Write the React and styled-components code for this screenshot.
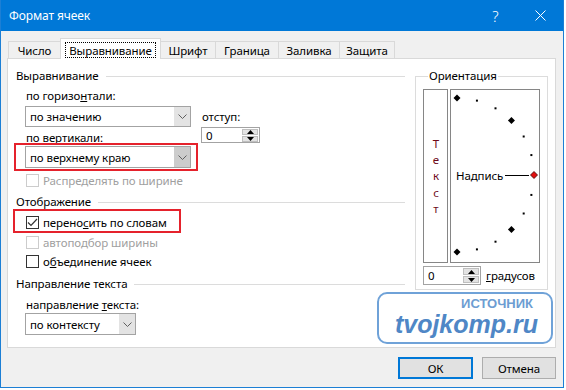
import React from "react";
import styled, { createGlobalStyle, css } from "styled-components";

const GlobalStyle = createGlobalStyle`
  html, body {
    margin: 0;
    padding: 0;
    background: #fff;
  }
  body {
    font-family: "Noto Sans", "Liberation Sans", sans-serif;
    font-size: 11.5px;
    letter-spacing: -0.1px;
    color: #000;
  }
`;

const Window = styled.div`
  position: relative;
  width: 564px;
  height: 388px;
  box-sizing: border-box;
  border: 1px solid #1c7fd5;
  border-top: none;
  background: #f0f0f0;
  display: flex;
  flex-direction: column;
`;

const TitleBar = styled.div`
  height: 31px;
  flex: none;
  display: flex;
  align-items: center;
  background: #0078d7;
  color: #fff;
  padding-left: 8px;
`;

const TitleText = styled.div`
  flex: 1;
  font-size: 12px;
  line-height: 16px;
`;

const TitleButton = styled.div`
  width: 45px;
  height: 31px;
  display: flex;
  align-items: center;
  justify-content: center;
  font-size: 15px;
  font-weight: 300;
`;

const Body = styled.div`
  padding: 7px 7px 0 6px;
  display: flex;
  flex-direction: column;
`;

const TabStrip = styled.div`
  display: flex;
  align-items: flex-end;
  height: 20px;
  padding-left: 1px;
`;

const Tab = styled.div`
  box-sizing: border-box;
  width: ${(p) => p.$w}px;
  height: 17px;
  margin-left: -1px;
  border: 1px solid #d9d9d9;
  border-bottom: none;
  background: #f0f0f0;
  display: flex;
  align-items: center;
  justify-content: center;
  line-height: 15px;
  &:first-child {
    margin-left: 0;
  }
  ${(p) =>
    p.$active &&
    css`
      height: 21px;
      margin-bottom: -1px;
      background: #fff;
      position: relative;
      z-index: 1;
    `}
`;

const FocusRing = styled.span`
  box-sizing: border-box;
  width: calc(100% - 8px);
  height: 16px;
  margin-top: 2px;
  border: 1px dotted #000;
  display: flex;
  align-items: center;
  justify-content: center;
`;

const Panel = styled.div`
  box-sizing: border-box;
  height: 290px;
  background: #fff;
  border: 1px solid #d9d9d9;
  display: grid;
  grid-template-columns: 397px 133px;
  column-gap: 10px;
  align-items: start;
`;

const LeftColumn = styled.div`
  padding-top: 9px;
  display: flex;
  flex-direction: column;
`;

const GroupHeader = styled.div`
  height: 16px;
  line-height: 16px;
  margin-top: ${(p) => p.$mt || 0}px;
  padding-left: 8px;
  display: flex;
  align-items: center;
  gap: 7px;
  white-space: nowrap;
  &::after {
    content: "";
    flex: 1;
    height: 1px;
    background: #dcdcdc;
  }
`;

const Indent = styled.div`
  padding-left: 17px;
  display: flex;
  flex-direction: column;
`;

const Label = styled.div`
  height: 16px;
  line-height: 16px;
  padding-left: 1px;
  margin-top: ${(p) => p.$mt || 0}px;
  white-space: nowrap;
  color: ${(p) => (p.$disabled ? "#a0a0a0" : "#000")};
`;

const AlignRow = styled.div`
  display: flex;
  gap: 10px;
  margin-top: 4px;
`;

const Stack = styled.div`
  display: flex;
  flex-direction: column;
  padding-top: ${(p) => p.$pt || 0}px;
`;

const Highlight = styled.div`
  position: relative;
  align-self: flex-start;
  margin-top: ${(p) => p.$mt || 0}px;
  &::after {
    content: "";
    position: absolute;
    top: ${(p) => p.$t}px;
    left: ${(p) => p.$l}px;
    right: ${(p) => p.$r}px;
    bottom: ${(p) => p.$b}px;
    border: 2px solid #e5222c;
    pointer-events: none;
  }
`;

const Select = styled.div`
  box-sizing: border-box;
  width: ${(p) => p.$w}px;
  height: ${(p) => p.$h || 21}px;
  margin-top: ${(p) => p.$mt || 0}px;
  border: 1px solid #a3a3a3;
  background: #fff;
  display: flex;
  align-items: stretch;
`;

const SelectValue = styled.div`
  flex: 1;
  padding-left: 4px;
  display: flex;
  align-items: center;
  white-space: nowrap;
`;

const SelectArrow = styled.div`
  width: 16px;
  background: ${(p) => (p.$active ? "#cccccc" : "#e3e3e3")};
  display: flex;
  align-items: center;
  justify-content: center;
`;

const Spin = styled.div`
  box-sizing: border-box;
  width: ${(p) => p.$w}px;
  height: ${(p) => p.$h}px;
  margin-top: ${(p) => p.$mt || 0}px;
  border: 1px solid #a3a3a3;
  background: #fff;
  display: flex;
`;

const SpinValue = styled.div`
  flex: 1;
  padding-left: 4px;
  display: flex;
  align-items: center;
`;

const SpinButtons = styled.div`
  width: 16px;
  display: flex;
  flex-direction: column;
  gap: 1px;
  padding: 1px 1px 1px 0;
  background: #fff;
`;

const SpinButton = styled.div`
  flex: 1;
  background: #e3e3e3;
  border: 1px solid #bfbfbf;
  display: flex;
  align-items: center;
  justify-content: center;
`;

const CheckRow = styled.div`
  display: inline-flex;
  align-items: center;
  gap: 4px;
  height: 16px;
  padding-left: 1px;
  margin-top: ${(p) => p.$mt || 0}px;
  white-space: nowrap;
  color: ${(p) => (p.$disabled ? "#a0a0a0" : "#000")};
`;

const Box = styled.span`
  box-sizing: border-box;
  width: 13px;
  height: 13px;
  border: 1px solid ${(p) => (p.$disabled ? "#cccccc" : "#333")};
  background: #fff;
  display: flex;
  align-items: center;
  justify-content: center;
`;

const OrientGroup = styled.fieldset`
  margin: 9px 0 0;
  padding: 5px 7px 4px;
  border: 1px solid #dcdcdc;
  min-width: 0;
`;

const Legend = styled.legend`
  margin-left: 5px;
  padding: 0 1px;
  line-height: 16px;
`;

const OrientRow = styled.div`
  display: flex;
  gap: 2px;
  height: 174px;
`;

const OrientBox = styled.div`
  box-sizing: border-box;
  width: ${(p) => p.$w}px;
  border: 1px solid #868686;
  display: flex;
  flex-direction: column;
  align-items: center;
  justify-content: center;
`;

const VerticalText = styled.span`
  writing-mode: vertical-lr;
  text-orientation: upright;
  letter-spacing: 1.2px;
  line-height: 16px;
  color: #6e0a1a;
`;

const DegreeRow = styled.div`
  display: flex;
  align-items: center;
  gap: 5px;
  margin-top: 3px;
`;

const Footer = styled.div`
  display: flex;
  justify-content: flex-end;
  gap: 9px;
  margin-top: 9px;
`;

const Button = styled.div`
  box-sizing: border-box;
  width: ${(p) => p.$w}px;
  height: 22px;
  background: #e1e1e1;
  border: ${(p) => (p.$primary ? "2px solid #0078d7" : "1px solid #adadad")};
  display: flex;
  align-items: center;
  justify-content: center;
`;

const Watermark = styled.div`
  position: absolute;
  left: 376px;
  top: 292px;
  width: 176px;
  height: 52px;
  box-sizing: border-box;
  border: 2px solid #6fa2d8;
  border-radius: 10px;
  padding: 3px 13px 0 12px;
  display: flex;
  flex-direction: column;
  align-items: flex-end;
  font-family: "Liberation Sans", Arial, sans-serif;
  font-weight: bold;
  letter-spacing: 0;
`;

const WatermarkSmall = styled.div`
  font-size: 13px;
  line-height: 14px;
  color: #6d9dd2;
  margin-right: 5px;
`;

const WatermarkBig = styled.div`
  font-size: 25px;
  line-height: 26px;
  font-style: italic;
  color: #4f87c6;
`;

const tabs = [
  { label: "Число", w: 53 },
  { label: "Выравнивание", w: 101, active: true },
  { label: "Шрифт", w: 56 },
  { label: "Граница", w: 64 },
  { label: "Заливка", w: 62 },
  { label: "Защита", w: 56 },
];

const Chevron = () => (
  <svg width="9" height="5" viewBox="0 0 9 5">
    <path d="M0.5 0.5 L4.5 4.5 L8.5 0.5" fill="none" stroke="#606060" strokeWidth="1" />
  </svg>
);

const Triangle = ({ down }) => (
  <svg width="7" height="4" viewBox="0 0 7 4">
    <path d={down ? "M0 0 H7 L3.5 4 Z" : "M0 4 H7 L3.5 0 Z"} fill="#000" />
  </svg>
);

const Dropdown = ({ value, w, h, mt, active }) => (
  <Select $w={w} $h={h} $mt={mt}>
    <SelectValue>{value}</SelectValue>
    <SelectArrow $active={active}>
      <Chevron />
    </SelectArrow>
  </Select>
);

const Spinner = ({ w, h, mt }) => (
  <Spin $w={w} $h={h} $mt={mt}>
    <SpinValue>0</SpinValue>
    <SpinButtons>
      <SpinButton>
        <Triangle />
      </SpinButton>
      <SpinButton>
        <Triangle down />
      </SpinButton>
    </SpinButtons>
  </Spin>
);

const Checkbox = ({ checked, disabled, children, mt }) => (
  <CheckRow $disabled={disabled} $mt={mt}>
    <Box $disabled={disabled}>
      {checked && (
        <svg width="11" height="9" viewBox="0 0 11 9">
          <path d="M1 4.5 L4 7.5 L10 1" fill="none" stroke="#333" strokeWidth="1.2" />
        </svg>
      )}
    </Box>
    <span>{children}</span>
  </CheckRow>
);

// dial points: semicircle around the left-middle of the box
const DIAL_CX = 6;
const DIAL_CY = 85;
const DIAL_R = 77;
const dialAngles = [90, 75, 60, 45, 30, 15, 0, -15, -30, -45, -60, -75, -90];

const Dial = () => (
  <svg width="88" height="172" viewBox="0 0 88 172">
    {dialAngles.map((a) => {
      const rad = (a * Math.PI) / 180;
      const x = DIAL_CX + DIAL_R * Math.cos(rad);
      const y = DIAL_CY - DIAL_R * Math.sin(rad);
      if (a === 0) {
        return (
          <polygon
            key={a}
            points={`${x},${y - 3.5} ${x + 3.5},${y} ${x},${y + 3.5} ${x - 3.5},${y}`}
            fill="#e31010"
            stroke="#3a0000"
            strokeWidth="0.8"
          />
        );
      }
      if (a % 45 === 0) {
        return (
          <polygon
            key={a}
            points={`${x},${y - 3.5} ${x + 3.5},${y} ${x},${y + 3.5} ${x - 3.5},${y}`}
            fill="#000"
          />
        );
      }
      return <rect key={a} x={x - 1} y={y - 1} width="2" height="2" fill="#000" />;
    })}
    <line x1="54" y1="85.5" x2="78" y2="85.5" stroke="#000" strokeWidth="1" />
    <text
      x="5"
      y="90"
      fontSize="11.5"
      letterSpacing="-0.1"
      fontFamily='"Noto Sans", "Liberation Sans", sans-serif'
      fill="#000"
    >
      Надпись
    </text>
  </svg>
);

export default function App() {
  return (
    <>
      <GlobalStyle />
      <Window>
        <TitleBar>
          <TitleText>Формат ячеек</TitleText>
          <TitleButton>?</TitleButton>
          <TitleButton>
            <svg width="11" height="11" viewBox="0 0 11 11">
              <path d="M0.5 0.5 L10.5 10.5 M10.5 0.5 L0.5 10.5" stroke="#fff" strokeWidth="1" />
            </svg>
          </TitleButton>
        </TitleBar>
        <Body>
          <TabStrip>
            {tabs.map((t) => (
              <Tab key={t.label} $w={t.w} $active={t.active}>
                {t.active ? <FocusRing>{t.label}</FocusRing> : t.label}
              </Tab>
            ))}
          </TabStrip>
          <Panel>
            <LeftColumn>
              <GroupHeader>Выравнивание</GroupHeader>
              <Indent>
                <AlignRow>
                  <Stack>
                    <Label>
                      по горизо<u>н</u>тали:
                    </Label>
                    <Dropdown value="по значению" w={166} h={21} mt={2} />
                    <Label $mt={3}>по вертикали:</Label>
                    <Highlight $t={-3} $l={-11} $r={-7} $b={-3}>
                      <Dropdown value="по верхнему краю" w={166} h={22} active />
                    </Highlight>
                  </Stack>
                  <Stack $pt={21}>
                    <Label>отступ:</Label>
                    <Spinner w={59} h={16} mt={2} />
                  </Stack>
                </AlignRow>
                <Checkbox disabled mt={4}>
                  Распределять по ширине
                </Checkbox>
              </Indent>
              <GroupHeader $mt={6}>Отображение</GroupHeader>
              <Indent>
                <Highlight $mt={4} $t={-5} $l={-12} $r={-14} $b={-3}>
                  <Checkbox checked>
                    перено<u>с</u>ить по словам
                  </Checkbox>
                </Highlight>
                <Checkbox disabled mt={4}>
                  автоподбор ширины
                </Checkbox>
                <Checkbox mt={3}>
                  о<u>б</u>ъединение ячеек
                </Checkbox>
              </Indent>
              <GroupHeader $mt={7}>Направление текста</GroupHeader>
              <Indent>
                <Label $mt={5}>
                  направление <u>т</u>екста:
                </Label>
                <Dropdown value="по контексту" w={111} h={22} />
              </Indent>
            </LeftColumn>
            <OrientGroup>
              <Legend>Ориентация</Legend>
              <OrientRow>
                <OrientBox $w={25}>
                  <VerticalText>Текст</VerticalText>
                </OrientBox>
                <OrientBox $w={90}>
                  <Dial />
                </OrientBox>
              </OrientRow>
              <DegreeRow>
                <Spinner w={58} h={19} />
                <span>
                  <u>г</u>радусов
                </span>
              </DegreeRow>
            </OrientGroup>
          </Panel>
          <Footer>
            <Button $w={75} $primary>
              ОК
            </Button>
            <Button $w={74}>Отмена</Button>
          </Footer>
        </Body>
        <Watermark>
          <WatermarkSmall>ИСТОЧНИК</WatermarkSmall>
          <WatermarkBig>tvojkomp.ru</WatermarkBig>
        </Watermark>
      </Window>
    </>
  );
}
